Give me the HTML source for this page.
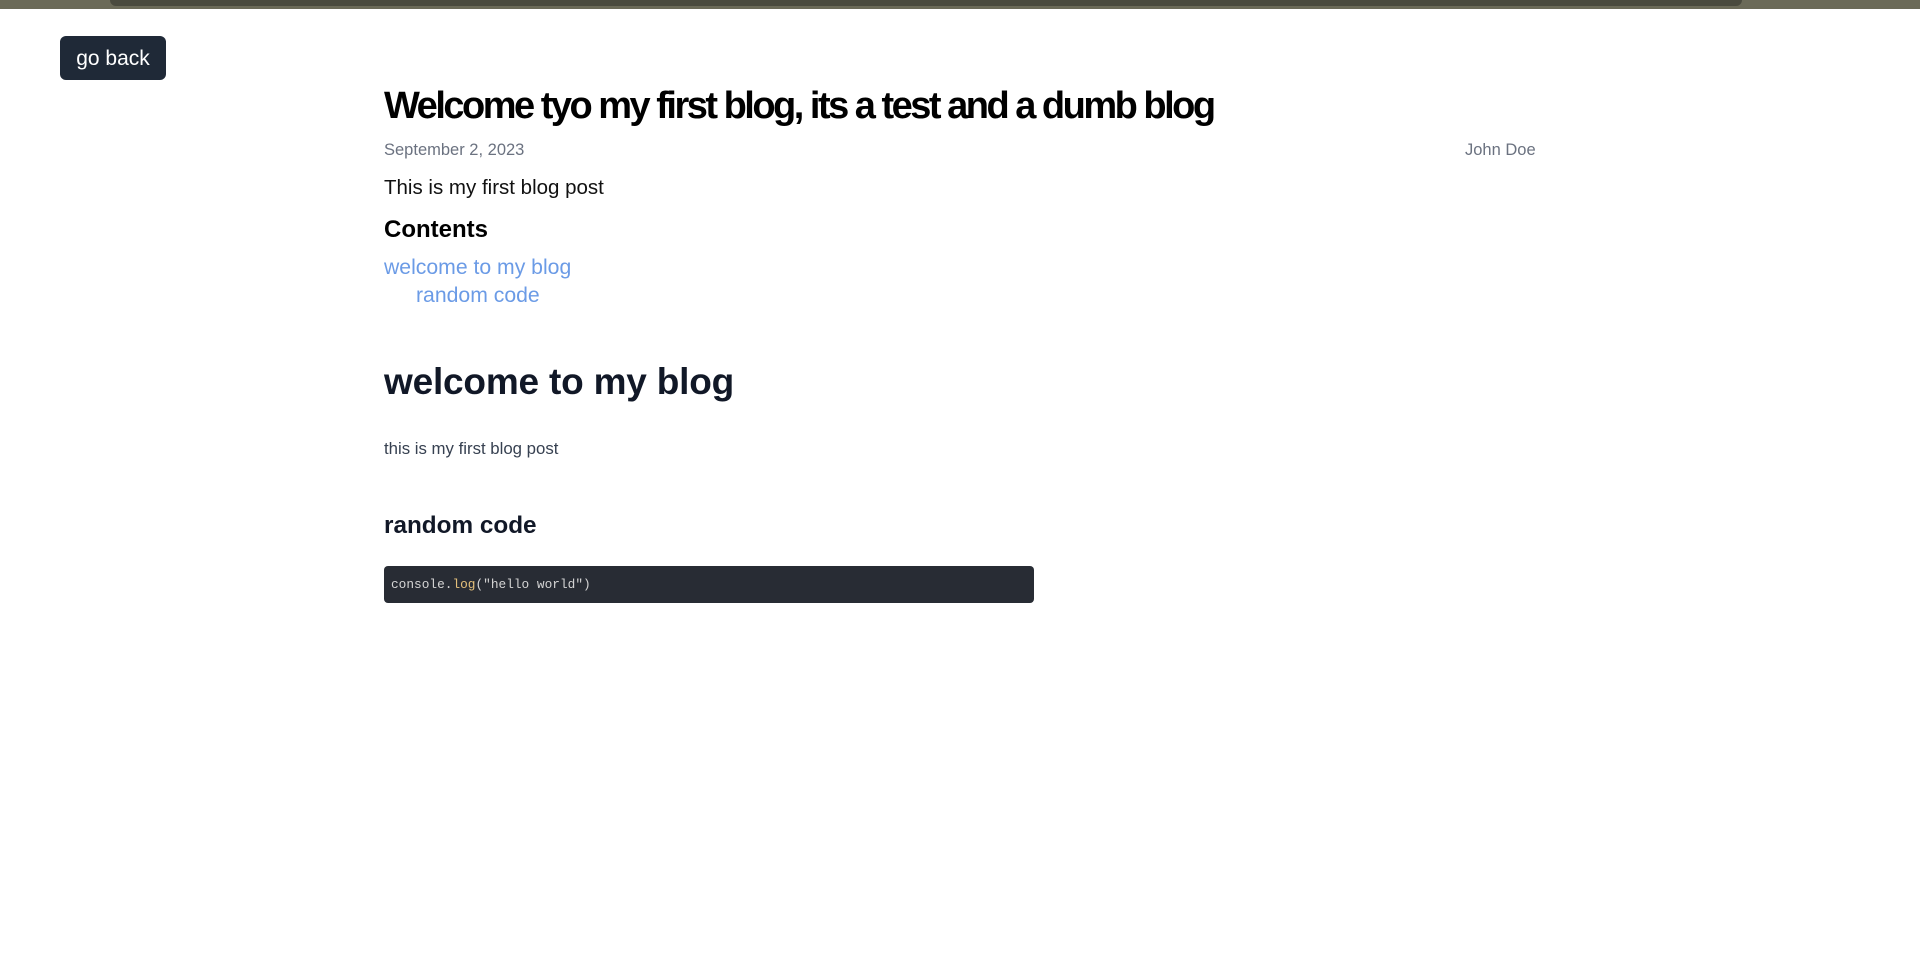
<!DOCTYPE html>
<html><head><meta charset="utf-8"><style>
*{margin:0;padding:0;box-sizing:border-box}
body{width:1920px;height:967px;background:#fff;font-family:"Liberation Sans",sans-serif;position:relative;overflow:hidden}
.bar{position:absolute;left:0;top:0;width:1920px;height:9px;background:#6b6a58}
.bar2{position:absolute;left:110px;top:0;width:1632px;height:6px;background:#4a4a3e;border-radius:0 0 8px 8px}
.btn{position:absolute;left:60px;top:36px;width:106px;height:44px;background:#1f2937;border-radius:6px;color:#fff;font-size:21px;line-height:46px;text-align:center}
.a{position:absolute;left:384px;white-space:nowrap}
</style></head><body>
<div class="bar"></div><div class="bar2"></div>
<div class="btn">go back</div>
<div class="a" style="top:85px;font-size:38px;font-weight:bold;letter-spacing:-2.5px;color:#000">Welcome tyo my first blog, its a test and a dumb blog</div>
<div class="a" style="top:141px;font-size:16.5px;color:#6b7280">September 2, 2023</div>
<div class="a" style="top:141px;left:1465px;font-size:16.5px;color:#6b7280">John Doe</div>
<div class="a" style="top:176px;font-size:20.5px;color:#111">This is my first blog post</div>
<div class="a" style="top:216px;font-size:24px;font-weight:bold;color:#000">Contents</div>
<div class="a" style="top:256px;font-size:21.2px;color:#6b9be6">welcome to my blog</div>
<div class="a" style="top:284px;left:416px;font-size:21.2px;color:#6b9be6">random code</div>
<div class="a" style="top:361px;font-size:37px;font-weight:bold;color:#111827;letter-spacing:-0.2px">welcome to my blog</div>
<div class="a" style="top:439px;font-size:16.8px;color:#374151">this is my first blog post</div>
<div class="a" style="top:512px;font-size:24.3px;font-weight:bold;color:#111827">random code</div>
<div class="a" style="top:566px;width:650px;height:37px;background:#282c34;border-radius:4px;font-family:'Liberation Mono',monospace;font-size:12.8px;line-height:37px;padding-left:7px;color:#d4d4d4">console.<span style="color:#e5c07b">log</span>("hello world")</div>
</body></html>
